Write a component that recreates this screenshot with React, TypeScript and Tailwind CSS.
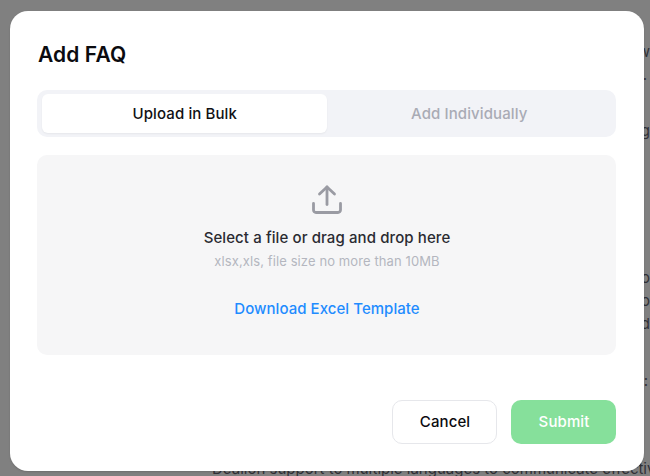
export default function App() {
  return (
    <div className="relative h-[476px] w-[650px] overflow-hidden bg-[#808080] font-['Inter',sans-serif]">
      {/* dimmed page text behind the dialog */}
      <div className="absolute inset-0 pl-[212px] text-[15px] leading-[23px] whitespace-nowrap text-[#303036]">
        <p className="-mt-[21px]">Dealion helps you respond to every customer quickly with a good reply p</p>
        <p className="mt-[38px] w-[438px] overflow-hidden text-right" dir="rtl">w</p>
        <p className="w-[435px] overflow-hidden text-right">.</p>
        <p className="mt-[33px] w-[438px] overflow-hidden text-right">g</p>
        <p className="mt-[124px] w-[438px] overflow-hidden text-right">o</p>
        <p className="w-[438px] overflow-hidden text-right">o</p>
        <p className="w-[438px] overflow-hidden text-right">d</p>
        <p className="mt-[34px] w-[436px] overflow-hidden text-right">:</p>
        <p className="mt-[65px]">Dealion support to multiple languages to communicate effectively</p>
      </div>

      <div className="absolute top-[11px] left-[10px] flex h-[460px] w-[634px] flex-col rounded-[18px] bg-white pr-[28px] pl-[27px] shadow-[0_1px_2px_rgba(0,0,0,0.15)]">
        <h2 className="mt-[29px] ml-[1px] text-[21px] leading-[30px] font-semibold tracking-[0.1px] text-[#0b0b0f]">Add FAQ</h2>

        <div className="mt-[20px] flex h-[47px] rounded-[10px] bg-[#f2f3f7] pt-[4px] pr-[5px] pb-[4px] pl-[5px] text-[15px] font-medium tracking-[0.1px]">
          <button className="flex-1 rounded-[6px] bg-white pt-[1px] pl-[1px] text-[#111114] shadow-[0_1px_2px_rgba(0,0,0,0.05)]">Upload in Bulk</button>
          <button className="flex-1 pt-[1px] pl-[1px] text-[#a9abb5]">Add Individually</button>
        </div>

        <div className="mt-[18px] flex h-[200px] flex-col items-center rounded-[10px] bg-[#f6f6f7] pl-[1px]">
          <svg className="mt-[29px]" width="32" height="32" viewBox="0 0 32 32" fill="none" stroke="#9a9ba3" strokeWidth="2.800" strokeLinecap="round" strokeLinejoin="round">
            <path d="M16 20.500V3" />
            <path d="M8.500 10L16 3l7.500 7" />
            <path d="M2.500 19.500V26a2.500 2.500 0 0 0 2.500 2.500h22a2.500 2.500 0 0 0 2.500-2.500v-6.500" />
          </svg>
          <p className="mt-[12px] text-[15px] leading-[20px] font-medium tracking-[0.1px] text-[#2a2b32]">Select a file or drag and drop here</p>
          <p className="mt-[5px] text-[13px] leading-[16px] tracking-[0.1px] text-[#b4b6bf]">xlsx,xls, file size no more than 10MB</p>
          <a className="mt-[30px] text-[15px] leading-[20px] font-medium tracking-[0.05px] text-[#1f8cff]">Download Excel Template</a>
        </div>

        <div className="mt-[45px] flex justify-end gap-[14px] text-[15px] font-medium tracking-[0.1px]">
          <button className="h-[44px] w-[105px] rounded-[10px] border border-[#e6e7eb] bg-white pl-[1px] text-[#0b0b0f]">Cancel</button>
          <button className="h-[44px] w-[105px] rounded-[10px] bg-[#86e09b] pl-[1px] text-white">Submit</button>
        </div>
      </div>
    </div>
  );
}
